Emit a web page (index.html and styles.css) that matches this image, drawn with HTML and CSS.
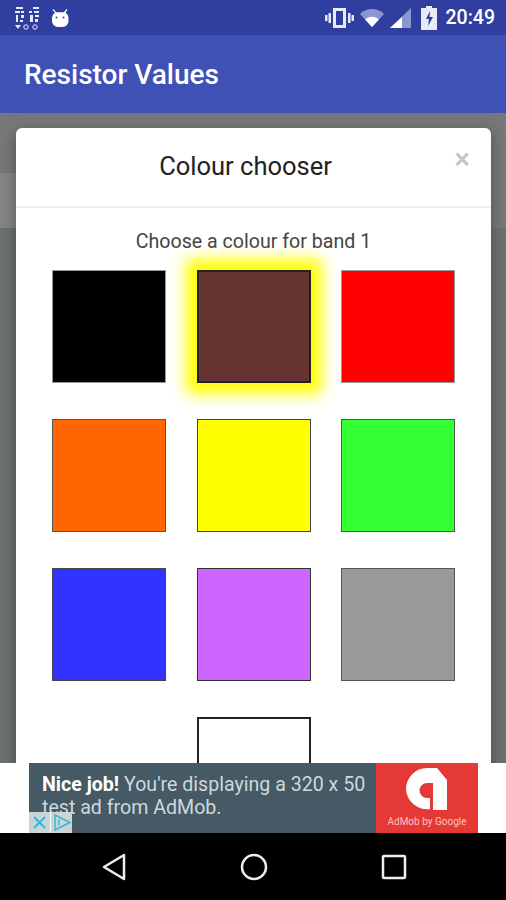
FILE: index.html
```html
<!DOCTYPE html>
<html lang="en">
  <head>
    <meta charset="UTF-8" />
    <meta name="viewport" content="width=device-width, initial-scale=1.0" />
    <title>Resistor Values</title>
    <link rel="stylesheet" href="styles.css">
  </head>
  <body>
    <div class="phone">
      <!-- Status bar -->
      <div class="status-bar">
        <div class="status-left">
          <svg width="26" height="26" viewBox="0 0 26 26" fill="#e8eaf6">
            <rect x="2" y="2" width="7" height="2" />
            <rect x="19" y="2" width="6" height="2" />
            <rect x="1" y="6" width="5" height="2" />
            <rect x="7" y="6" width="3" height="2" />
            <rect x="15" y="6" width="3" height="2" />
            <rect x="20" y="6" width="5" height="2" />
            <rect x="2" y="10" width="2" height="7" />
            <rect x="7" y="10" width="3" height="3" />
            <rect x="6" y="15" width="3" height="2" />
            <rect x="16" y="10" width="3" height="7" />
            <rect x="21" y="10" width="4" height="2" />
            <rect x="21" y="14" width="3" height="3" />
            <path d="M1 20h6l-3 4z" />
            <circle cx="12" cy="22" r="2.2" fill="none" stroke="#e8eaf6" />
            <circle cx="21" cy="22" r="2.2" fill="none" stroke="#e8eaf6" />
          </svg>
          <svg width="20" height="20" viewBox="0 0 20 20" fill="#fff">
            <path d="M3.5 1l2.6 3.2h7.8L16.500 1l1 .7-2 3a7 7 0 0 1 3 5.800V13a6 6 0 0 1-6 6H8a6 6 0 0 1-6-6v-2.500a7 7 0 0 1 3-5.800l-2.500-3z" />
            <circle cx="6.500" cy="9.500" r="1" fill="#303f9f" />
            <circle cx="13.500" cy="9.500" r="1" fill="#303f9f" />
          </svg>
        </div>
        <div class="status-right">
          <svg class="ic-vibrate" width="29" height="22" viewBox="0 0 29 22" fill="#e8eaf6">
            <rect x="0" y="8" width="2.500" height="6" />
            <rect x="3.500" y="6" width="2.500" height="10" />
            <path fill-rule="evenodd" d="M8 1h13v20H8zM11 4v14h7V4z" />
            <rect x="23" y="6" width="2.500" height="10" />
            <rect x="26.500" y="8" width="2.500" height="6" />
          </svg>
          <svg class="ic-wifi" width="24" height="18" viewBox="0 0 24 18">
            <path d="M0 5a17 17 0 0 1 24 0L12 18z" fill="#8c97cf" />
            <path d="M5 10.500a10 10 0 0 1 14 0L12 18z" fill="#fff" />
          </svg>
          <svg class="ic-signal" width="21" height="20" viewBox="0 0 21 20">
            <path d="M21 0v20H0z" fill="#8c97cf" />
            <path d="M12 9v11H0z" fill="#fff" />
          </svg>
          <svg class="ic-battery" width="16" height="24" viewBox="0 0 16 24">
            <path d="M5 0h6v2h5v22H0V2h5z" fill="#e8eaf6" />
            <path d="M9 5l-4 8h3l-1 7 5-9H8.500z" fill="#303f9f" />
          </svg>
          <span class="clock">20:49</span>
        </div>
      </div>

      <!-- App bar -->
      <header class="app-bar">Resistor Values</header>

      <!-- Dialog over the dimmed page -->
      <main class="content">
        <div class="page-strip"></div>
        <div class="modal">
          <div class="modal-header">
            <h1>Colour chooser</h1>
            <span class="close">&times;</span>
          </div>
          <div class="modal-body">
            <p>Choose a colour for band 1</p>
            <div class="swatches">
              <div class="swatch black"></div>
              <div class="swatch brown selected"></div>
              <div class="swatch red"></div>
              <div class="swatch orange"></div>
              <div class="swatch yellow"></div>
              <div class="swatch green"></div>
              <div class="swatch blue"></div>
              <div class="swatch violet"></div>
              <div class="swatch grey"></div>
              <div class="swatch spacer"></div>
              <div class="swatch white"></div>
            </div>
          </div>
        </div>
      </main>

      <!-- Ad banner -->
      <div class="ad-bar">
        <div class="ad">
          <div class="ad-text"><b>Nice job!</b> You're displaying a 320 x 50 test ad from AdMob.</div>
          <div class="ad-logo">
            <svg width="44" height="44" viewBox="0 0 44 44">
              <path d="M22 0H32L42 12V42H28V15H22A7.500 7.500 0 0 0 14.500 22.500 7.500 7.500 0 0 0 22 30H25V41A21 21 0 0 1 1 21 21 21 0 0 1 22 0z" fill="#fff" />
            </svg>
            <span>AdMob by Google</span>
          </div>
          <div class="ad-choices">
            <svg width="21" height="21" viewBox="0 0 21 21">
              <path d="M5 5l11 11M16 5L5 16" stroke="#35b8d8" stroke-width="2" fill="none" />
            </svg>
            <svg width="21" height="21" viewBox="0 0 21 21">
              <path d="M4 3L19 10.500 4 18z" stroke="#35b8d8" stroke-width="1.500" fill="none" />
              <path d="M8 7.500v6" stroke="#35b8d8" stroke-width="1.500" />
            </svg>
          </div>
        </div>
      </div>

      <!-- Navigation bar -->
      <nav class="nav-bar">
        <svg width="26" height="28" viewBox="0 0 26 28">
          <path d="M23 2v24L3 14z" fill="none" stroke="#eee" stroke-width="2.500" stroke-linejoin="round" />
        </svg>
        <svg width="28" height="28" viewBox="0 0 28 28">
          <circle cx="14" cy="14" r="12" fill="none" stroke="#eee" stroke-width="2.500" />
        </svg>
        <svg width="26" height="26" viewBox="0 0 26 26">
          <rect x="2" y="2" width="22" height="22" rx="1" fill="none" stroke="#eee" stroke-width="2.500" />
        </svg>
      </nav>
    </div>
  </body>
</html>
```
FILE: styles.css
```css
* {
  box-sizing: border-box;
}

body {
  margin: 0;
  font-family: Roboto, "Liberation Sans", sans-serif;
}

.phone {
  display: flex;
  flex-direction: column;
  width: 506px;
  height: 900px;
  overflow: hidden;
}

/* Status bar */
.status-bar {
  display: flex;
  justify-content: space-between;
  align-items: center;
  height: 35px;
  padding: 0 11px 0 14px;
  background-color: #303f9f;
  color: #fff;
}
.status-left {
  display: flex;
  align-items: center;
  gap: 10px;
}
.status-right {
  display: flex;
  align-items: center;
}
.ic-wifi {
  margin-left: 6px;
}
.ic-signal {
  margin-left: 6px;
}
.ic-battery {
  margin-left: 10px;
}
.clock {
  margin-left: 9px;
  font-size: 19.5px;
  font-weight: 500;
}

/* App bar */
.app-bar {
  display: flex;
  align-items: center;
  height: 78px;
  padding-left: 24px;
  background-color: #3f51b5;
  color: #fff;
  font-size: 28px;
  font-weight: 500;
}

/* Dimmed page and dialog */
.content {
  position: relative;
  flex: 1;
  min-height: 0;
  padding: 15px 15px 0 16px;
  background: linear-gradient(#757876 115px, #6b726d 115px);
  overflow: hidden;
}
.page-strip {
  position: absolute;
  top: 60px;
  left: 0;
  width: 16px;
  height: 55px;
  background-color: #828583;
}
.modal {
  position: relative;
  height: 700px;
  background-color: #fff;
  border-radius: 6px 6px 0 0;
  box-shadow: 0 4px 14px rgba(0, 0, 0, 0.35);
}
.modal-header {
  position: relative;
  height: 80px;
  padding: 22px 16px 0 0;
  border-bottom: 2px solid #eeeeee;
  text-align: center;
}
.modal-header h1 {
  margin: 0;
  font-size: 25.5px;
  font-weight: 400;
  line-height: 32px;
  color: #222;
}
.close {
  position: absolute;
  top: 14px;
  right: 21px;
  font-size: 29px;
  line-height: 34px;
  font-weight: 500;
  color: #c4c4c4;
}
.modal-body {
  padding: 23px 36px 0;
}
.modal-body p {
  margin: 0 0 17px;
  font-size: 19.6px;
  line-height: 22px;
  text-align: center;
  color: #444;
}
.swatches {
  display: grid;
  grid-template-columns: repeat(3, 114px);
  justify-content: space-between;
  row-gap: 36px;
}
.swatch {
  height: 113px;
  border: 1px solid #999;
}
.swatch.selected {
  border: 2px solid #222;
  box-shadow: 0 0 14px 11px #ffff00;
}
.swatch.spacer {
  visibility: hidden;
}
.black { background-color: #000; }
.brown { background-color: #663333; }
.red { background-color: #ff0000; }
.orange { background-color: #ff6600; border-color: #555; }
.yellow { background-color: #ffff00; border-color: #444; }
.green { background-color: #33ff33; border-color: #555; }
.blue { background-color: #3333ff; border-color: #444; }
.violet { background-color: #cc66ff; border-color: #333; }
.grey { background-color: #999999; border-color: #555; }
.white { background-color: #fff; border: 2px solid #222; }

/* Ad */
.ad-bar {
  position: relative;
  height: 70px;
  padding: 0 28px 0 29px;
  background-color: #fff;
}
.ad {
  position: relative;
  display: flex;
  height: 70px;
  background-color: #455a64;
}
.ad-text {
  flex: 1;
  padding: 10px 2px 0 13px;
  font-size: 19.6px;
  line-height: 23px;
  color: #cfd8dc;
}
.ad-text b {
  color: #fff;
}
.ad-logo {
  display: flex;
  flex-direction: column;
  align-items: center;
  width: 102px;
  padding-top: 5px;
  background-color: #e53935;
  color: #f7c4c2;
  font-size: 10px;
}
.ad-logo span {
  margin-top: 4px;
}
.ad-choices {
  position: absolute;
  left: 0;
  bottom: 0;
  display: flex;
  gap: 1px;
  background-color: #fff;
}
.ad-choices svg {
  background-color: #cdd4d6;
}

/* Navigation bar */
.nav-bar {
  display: flex;
  justify-content: center;
  align-items: center;
  gap: 113px;
  height: 67px;
  padding-left: 2px;
  background-color: #000;
}
```
